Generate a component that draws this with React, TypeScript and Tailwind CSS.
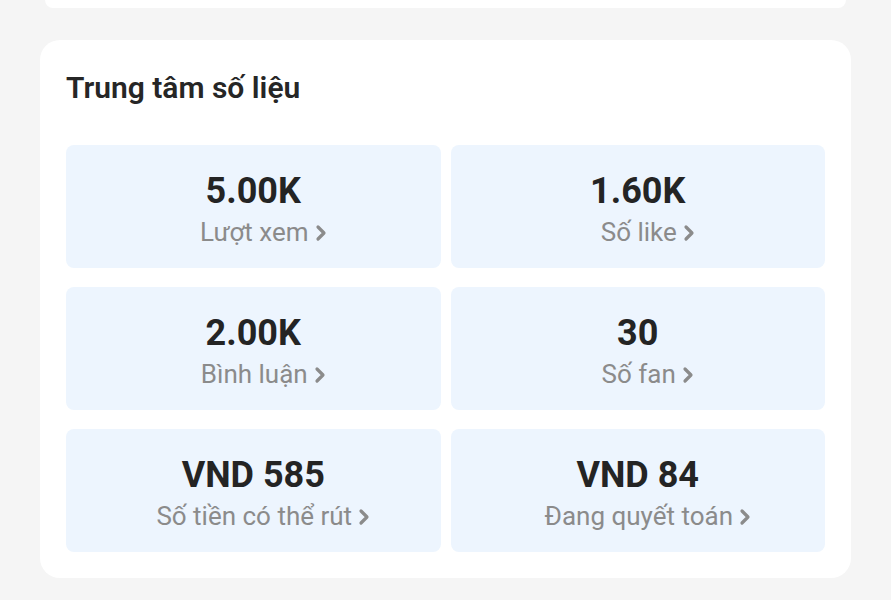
import React from "react";

type Stat = { value: string; label: string };

const stats: Stat[] = [
  { value: "5.00K", label: "Lượt xem" },
  { value: "1.60K", label: "Số like" },
  { value: "2.00K", label: "Bình luận" },
  { value: "30", label: "Số fan" },
  { value: "VND 585", label: "Số tiền có thể rút" },
  { value: "VND 84", label: "Đang quyết toán" },
];

function Chevron() {
  return (
    <svg width="12" height="18" viewBox="0 0 12 18" className="ml-[6px] mt-[2px] shrink-0">
      <path d="M3 3l6 6-6 6" fill="none" stroke="#8b8b8b" strokeWidth="3.2" strokeLinecap="round" strokeLinejoin="round" />
    </svg>
  );
}

export default function App() {
  return (
    <div
      className="min-h-[600px] w-full bg-[#f5f5f5] overflow-hidden"
      style={{ fontFamily: "Roboto, 'Noto Sans', sans-serif" }}
    >
      {/* previous card, mostly scrolled off */}
      <div className="mx-[45px] h-[8px] rounded-b-[18px] bg-white" />

      <div className="mx-[40px] mt-[32px] rounded-[20px] bg-white px-[26px] pb-[26px] pt-[68px] relative">
        <h2 className="absolute left-[26px] top-[28px] text-[30px] font-semibold leading-[40px] text-[#262626]">
          Trung tâm số liệu
        </h2>

        <div className="mt-[37px] grid grid-cols-2 gap-x-[10px] gap-y-[19px]">
          {stats.map((s) => (
            <div
              key={s.label}
              className="flex h-[123px] flex-col items-center justify-center rounded-[8px] bg-[#edf5fe]"
            >
              <div className="text-[36px] font-bold leading-[46px] text-[#242424]">{s.value}</div>
              <div className="mt-[4px] flex items-center text-[26px] leading-[28px] text-[#8b8b8b]">
                {/* spacer so the label text itself stays centred */}
                <span className="w-[20px] shrink-0" />
                {s.label}
                <Chevron />
              </div>
            </div>
          ))}
        </div>
      </div>
    </div>
  );
}
